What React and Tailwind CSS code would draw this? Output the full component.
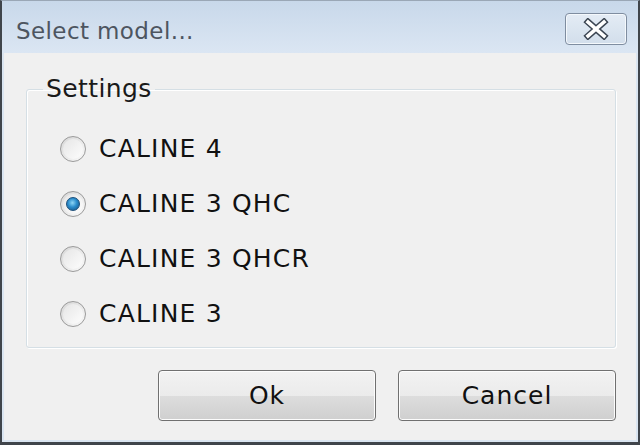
import React, { useState } from "react";

const models = ["CALINE 4", "CALINE 3 QHC", "CALINE 3 QHCR", "CALINE 3"];

const Radio = ({ checked }) => (
  <span className="w-[26px] h-[26px] rounded-full border-[1.5px] border-[#9a9a9a] bg-gradient-to-br from-[#d6d6d6] to-[#fafafa] flex items-center justify-center shrink-0">
    <span className="w-[20px] h-[20px] rounded-full bg-gradient-to-br from-[#e6e6e6] to-[#fdfdfd] flex items-center justify-center">
      {checked && (
        <span className="w-[14px] h-[14px] rounded-full border border-[#1c4f7a] bg-[radial-gradient(circle_at_45%_40%,#8fd6f5_0%,#2a8ccb_45%,#164d7c_100%)]" />
      )}
    </span>
  </span>
);

const CloseIcon = () => (
  <svg width="30" height="22" viewBox="0 0 30 22">
    <path
      d="M7 4 L23 18 M23 4 L7 18"
      stroke="#3b4552"
      strokeWidth="6.5"
      strokeLinecap="square"
      fill="none"
    />
    <path
      d="M7 4 L23 18 M23 4 L7 18"
      stroke="#ffffff"
      strokeWidth="3.6"
      strokeLinecap="square"
      fill="none"
    />
  </svg>
);

const App = () => {
  const [selected, setSelected] = useState(1);

  return (
    <div className="w-[640px] h-[445px] flex flex-col bg-[#dae5f1] border-l-2 border-r-2 border-b-[3px] border-t border-[#40454b] border-t-[#9aa7b6] font-['DejaVu_Sans',sans-serif] overflow-hidden">
      <div className="h-[52px] shrink-0 flex items-center justify-between pl-[14px] pr-[11px] pt-[3px] bg-gradient-to-b from-[#c8d8ea] to-[#dbe6f3]">
        <span className="mt-[5px] text-[23px] text-[#4d5560] tracking-[0.4px]">Select model...</span>
        <button className="w-[62px] h-[32px] rounded-[4px] border border-[#7f8da0] bg-gradient-to-b from-[#e4ecf5] to-[#d2deeb] shadow-[inset_0_0_0_1px_#f4f8fc] flex items-center justify-center">
          <CloseIcon />
        </button>
      </div>

      <div className="flex-1 mx-[2px] mb-[2px] bg-[#f0f0f0] flex flex-col pl-[22px] pr-[20px] pt-[21px]">
        <fieldset className="h-[274px] border border-[#d5dfe5] rounded-[3px] shadow-[inset_1px_1px_0_#ffffff,1px_1px_0_#ffffff] pl-[16px]">
          <legend className="px-[3px] text-[25px] leading-[30px] text-[#1a1a1a] tracking-[0.4px]">Settings</legend>
          <div className="flex flex-col gap-[29px] pl-[17px] pt-[32px]">
            {models.map((m, i) => (
              <label
                key={m}
                className="flex items-center gap-[13px] h-[26px] cursor-pointer"
                onClick={() => setSelected(i)}
              >
                <Radio checked={selected === i} />
                <span className="text-[25px] text-[#111111] tracking-[1.2px]">{m}</span>
              </label>
            ))}
          </div>
        </fieldset>

        <div className="flex justify-end gap-[22px] mt-[22px]">
          {["Ok", "Cancel"].map((b) => (
            <button
              key={b}
              className="w-[218px] h-[51px] rounded-[4px] border border-[#707070] shadow-[inset_0_0_0_1px_#fcfcfc] bg-[linear-gradient(to_bottom,#f2f2f2_0%,#ebebeb_50%,#dddddd_51%,#cfcfcf_100%)] text-[25px] text-[#111111] tracking-[1px]"
            >
              {b}
            </button>
          ))}
        </div>
      </div>
    </div>
  );
};

export default App;
